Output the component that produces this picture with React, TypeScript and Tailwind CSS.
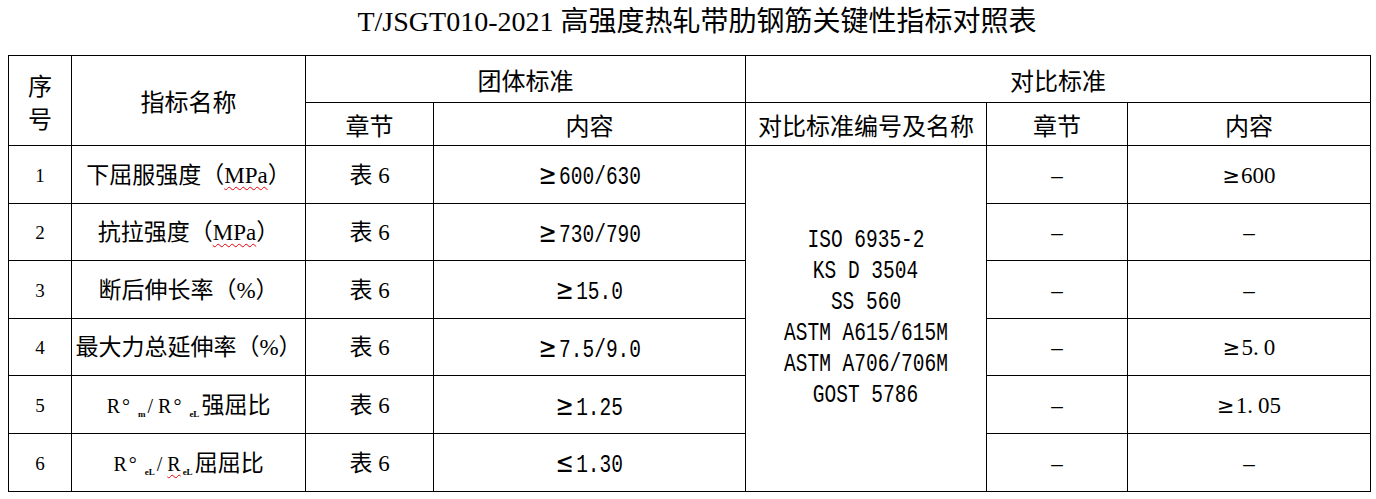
import React from "react";

const serif = "font-['Liberation_Serif','Noto_Sans_CJK_SC',serif]";
const sans = "font-['Noto_Sans_CJK_SC',sans-serif]";
const cell = "border border-black p-0 text-center align-middle";
const bcell = "border border-black p-0 pt-[3px] text-center align-middle";

function Wavy({ children, className = "" }: { children: React.ReactNode; className?: string }) {
  return (
    <span className={"underline decoration-wavy decoration-red-600 decoration-1 underline-offset-[3px] " + className}>
      {children}
    </span>
  );
}

function Sub({ children, wavy = false }: { children: React.ReactNode; wavy?: boolean }) {
  const inner = <span className="relative top-[4px] mx-[2px] text-[9px] font-bold">{children}</span>;
  return wavy ? <Wavy>{inner}</Wavy> : inner;
}

function Deg() {
  return <span className="ml-[2px] mr-[6px]">°</span>;
}

function MonoVal({ op, v }: { op: string; v: string }) {
  return (
    <span className="inline-block scale-x-[0.78] font-['Liberation_Mono',monospace] text-[25px] leading-none">
      <span className="mr-[3px] font-['DejaVu_Sans',sans-serif] text-[28px]">{op}</span>
      {v}
    </span>
  );
}

function Ge() {
  return <span className="mr-[1px] font-['DejaVu_Sans',sans-serif] text-[21px]">≥</span>;
}

function Dash() {
  return <span className={serif + " text-[23px]"}>–</span>;
}

type Row = {
  n: string;
  name: React.ReactNode;
  op: string;
  v: string;
  cmp: React.ReactNode;
};

const rows: Row[] = [
  {
    n: "1",
    name: (
      <span className={serif + " text-[23px]"}>
        下屈服强度（<Wavy>MPa</Wavy>）
      </span>
    ),
    op: "≥",
    v: "600/630",
    cmp: (
      <span className={serif + " text-[23px]"}>
        <Ge />
        600
      </span>
    ),
  },
  {
    n: "2",
    name: (
      <span className={serif + " text-[23px]"}>
        抗拉强度（<Wavy>MPa</Wavy>）
      </span>
    ),
    op: "≥",
    v: "730/790",
    cmp: <Dash />,
  },
  {
    n: "3",
    name: <span className={serif + " text-[23px]"}>断后伸长率（%）</span>,
    op: "≥",
    v: "15.0",
    cmp: <Dash />,
  },
  {
    n: "4",
    name: <span className={serif + " text-[23px]"}>最大力总延伸率（%）</span>,
    op: "≥",
    v: "7.5/9.0",
    cmp: (
      <span className={serif + " text-[23px]"}>
        <Ge />5<span className="mr-[5px]">.</span>0
      </span>
    ),
  },
  {
    n: "5",
    name: (
      <span className={serif + " text-[20px]"}>
        R<Deg />
        <Sub>m</Sub>/ R<Deg />
        <Sub wavy>eL</Sub>
        <span className="text-[23px]">强屈比</span>
      </span>
    ),
    op: "≥",
    v: "1.25",
    cmp: (
      <span className={serif + " text-[23px]"}>
        <Ge />1<span className="mr-[5px]">.</span>05
      </span>
    ),
  },
  {
    n: "6",
    name: (
      <span className={serif + " text-[20px]"}>
        R<Deg />
        <Sub wavy>eL</Sub>/{" "}
        <Wavy>
          R<Sub>eL</Sub>
        </Wavy>
        <span className="text-[23px]">屈屈比</span>
      </span>
    ),
    op: "≤",
    v: "1.30",
    cmp: <Dash />,
  },
];

const standards = ["ISO 6935-2", "KS D 3504", "SS 560", "ASTM A615/615M", "ASTM A706/706M", "GOST 5786"];

export default function App() {
  return (
    <div className="w-[1376px] h-[499px] overflow-hidden bg-white text-black">
      <h1 className={serif + " h-[55px] pt-[4px] pl-[18px] text-center text-[28px] leading-[36px] font-normal"}>
        T/JSGT010-2021 高强度热轧带肋钢筋关键性指标对照表
      </h1>
      <div className="pl-[8px]">
        <table className="w-[1362px] table-fixed border-collapse">
          <colgroup>
            <col className="w-[63px]" />
            <col className="w-[234px]" />
            <col className="w-[128px]" />
            <col className="w-[312px]" />
            <col className="w-[241px]" />
            <col className="w-[141px]" />
            <col className="w-[243px]" />
          </colgroup>
          <thead className={sans + " text-[24px] leading-[33px]"}>
            <tr>
              <td rowSpan={2} className={cell}>
                序<br />号
              </td>
              <td rowSpan={2} className={cell}>
                指标名称
              </td>
              <td colSpan={2} className={cell + " h-[47px]"}>
                团体标准
              </td>
              <td colSpan={3} className={cell}>
                对比标准
              </td>
            </tr>
            <tr>
              <td className={cell + " h-[43px]"}>章节</td>
              <td className={cell}>内容</td>
              <td className={cell}>对比标准编号及名称</td>
              <td className={cell}>章节</td>
              <td className={cell}>内容</td>
            </tr>
          </thead>
          <tbody>
            {rows.map((r, i) => (
              <tr key={r.n}>
                <td className={bcell + " h-[57.6px] " + serif + " text-[19px]"}>{r.n}</td>
                <td className={bcell}>{r.name}</td>
                <td className={bcell + " " + serif + " text-[23px]"}>表 6</td>
                <td className={bcell}>
                  <MonoVal op={r.op} v={r.v} />
                </td>
                {i === 0 && (
                  <td rowSpan={6} className={cell}>
                    <div className="flex flex-col items-center">
                      {standards.map((s) => (
                        <span
                          key={s}
                          className="inline-block scale-x-[0.78] whitespace-pre font-['Liberation_Mono',monospace] text-[25px] leading-[31px]"
                        >
                          {s}
                        </span>
                      ))}
                    </div>
                  </td>
                )}
                <td className={bcell}>
                  <Dash />
                </td>
                <td className={bcell}>{r.cmp}</td>
              </tr>
            ))}
          </tbody>
        </table>
      </div>
    </div>
  );
}
